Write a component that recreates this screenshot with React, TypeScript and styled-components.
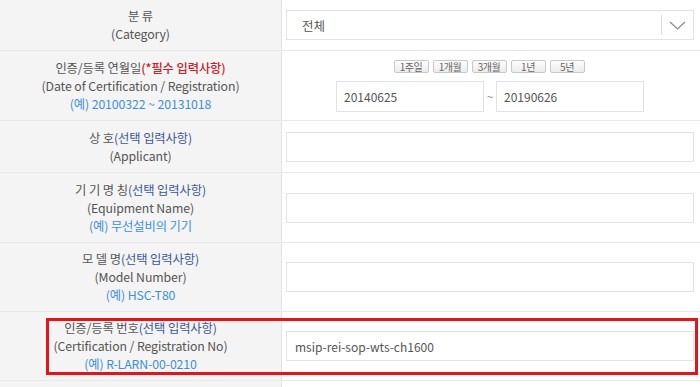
import React from 'react';
import styled, {createGlobalStyle} from 'styled-components';

const GlobalStyle = createGlobalStyle`
    html, body {
        margin: 0;
        padding: 0;
        background: #ffffff;
    }
    body {
        font-family: "Noto Sans CJK KR", "Noto Sans", sans-serif;
        color: #555;
        overflow: hidden;
    }
`;

const Table = styled.div`
    width: 700px;
    display: flex;
    flex-direction: column;
`;

const Row = styled.div<{$h: number}>`
    position: relative;
    display: grid;
    grid-template-columns: 282px 1fr;
    height: ${p => p.$h}px;
    border-bottom: 1px solid #e8e8e8;
`;

const Label = styled.div`
    background: #f4f4f4;
    border-right: 1px solid #e3e3e3;
    display: flex;
    flex-direction: column;
    align-items: center;
    justify-content: center;
    text-align: center;
    font-size: 12.3px;
    line-height: 18px;
    color: #555;
    letter-spacing: -0.1px;
`;

const Note = styled.span<{$tone: 'required' | 'optional'}>`
    color: ${p => (p.$tone === 'required' ? '#c9202a' : '#3a5896')};
    font-weight: ${p => (p.$tone === 'required' ? 500 : 400)};
`;

const Example = styled.span`
    color: #3d8fd9;
`;

const Cell = styled.div`
    display: flex;
    flex-direction: column;
    justify-content: center;
    padding: 0 6px 0 4px;
`;

const TextInput = styled.input`
    box-sizing: border-box;
    width: 100%;
    height: 30px;
    border: 1px solid #e2e2e2;
    background: #fff;
    padding: 0 8px;
    font-family: "Noto Sans CJK KR", "Noto Sans", sans-serif;
    font-size: 12px;
    color: #555;
    outline: none;
`;

const Select = styled.div`
    box-sizing: border-box;
    height: 30px;
    border: 1px solid #e2e2e2;
    display: flex;
    align-items: center;
    padding-left: 15px;
    font-size: 12.5px;
    color: #555;
`;

const SelectText = styled.span`
    flex: 1;
`;

const Chevron = styled.div`
    height: 20px;
    width: 31px;
    border-left: 1px solid #dcdcdc;
    display: flex;
    align-items: center;
    justify-content: center;
`;

const PeriodCell = styled.div`
    display: flex;
    flex-direction: column;
    align-items: center;
    justify-content: center;
    gap: 8px;
    padding-left: 54px;
    padding-right: 52px;
`;

const QuickButtons = styled.div`
    display: flex;
    gap: 4px;
    margin-left: -6px;
`;

const QuickButton = styled.button`
    box-sizing: border-box;
    width: 35px;
    height: 13px;
    padding: 0;
    border: 1px solid #c8c8c8;
    border-radius: 2px;
    background: linear-gradient(#fdfdfd, #ececec);
    font-family: "Noto Sans CJK KR", "Noto Sans", sans-serif;
    font-size: 10px;
    line-height: 11px;
    color: #666;
    letter-spacing: -0.4px;
`;

const DateRow = styled.div`
    display: flex;
    align-items: center;
    gap: 3px;
    width: 100%;
`;

const DateInput = styled(TextInput)`
    width: 148px;
    height: 31px;
    padding-left: 7px;
`;

const Tilde = styled.span`
    font-size: 11px;
    color: #888;
    width: 6px;
    text-align: center;
`;

const Highlight = styled.div`
    position: absolute;
    left: 46px;
    top: 6px;
    right: 2px;
    bottom: 5px;
    border: 3px solid #e3151c;
    pointer-events: none;
`;

export default function App() {
    return (
        <>
            <GlobalStyle />
            <Table>
                <Row $h={50}>
                    <Label>
                        <span>분 류</span>
                        <span>(Category)</span>
                    </Label>
                    <Cell>
                        <Select>
                            <SelectText>전체</SelectText>
                            <Chevron>
                                <svg width="17" height="9" viewBox="0 0 17 9">
                                    <path d="M1 1 L8.5 8 L16 1" fill="none" stroke="#888" strokeWidth="1.2" />
                                </svg>
                            </Chevron>
                        </Select>
                    </Cell>
                </Row>
                <Row $h={69}>
                    <Label>
                        <span>
                            인증/등록 연월일<Note $tone="required">(*필수 입력사항)</Note>
                        </span>
                        <span>(Date of Certification / Registration)</span>
                        <Example>(예) 20100322 ~ 20131018</Example>
                    </Label>
                    <PeriodCell>
                        <QuickButtons>
                            {['1주일', '1개월', '3개월', '1년', '5년'].map(b => (
                                <QuickButton key={b}>{b}</QuickButton>
                            ))}
                        </QuickButtons>
                        <DateRow>
                            <DateInput defaultValue="20140625" />
                            <Tilde>~</Tilde>
                            <DateInput defaultValue="20190626" />
                        </DateRow>
                    </PeriodCell>
                </Row>
                <Row $h={51}>
                    <Label>
                        <span>
                            상 호<Note $tone="optional">(선택 입력사항)</Note>
                        </span>
                        <span>(Applicant)</span>
                    </Label>
                    <Cell>
                        <TextInput />
                    </Cell>
                </Row>
                <Row $h={69}>
                    <Label>
                        <span>
                            기 기 명 칭<Note $tone="optional">(선택 입력사항)</Note>
                        </span>
                        <span>(Equipment Name)</span>
                        <Example>(예) 무선설비의 기기</Example>
                    </Label>
                    <Cell>
                        <TextInput />
                    </Cell>
                </Row>
                <Row $h={68}>
                    <Label>
                        <span>
                            모 델 명<Note $tone="optional">(선택 입력사항)</Note>
                        </span>
                        <span>(Model Number)</span>
                        <Example>(예) HSC-T80</Example>
                    </Label>
                    <Cell>
                        <TextInput />
                    </Cell>
                </Row>
                <Row $h={68}>
                    <Label>
                        <span>
                            인증/등록 번호<Note $tone="optional">(선택 입력사항)</Note>
                        </span>
                        <span>(Certification / Registration No)</span>
                        <Example>(예) R-LARN-00-0210</Example>
                    </Label>
                    <Cell>
                        <TextInput defaultValue="msip-rei-sop-wts-ch1600" />
                    </Cell>
                    <Highlight />
                </Row>
                <Row $h={40}>
                    <Label />
                    <Cell />
                </Row>
            </Table>
        </>
    );
}
